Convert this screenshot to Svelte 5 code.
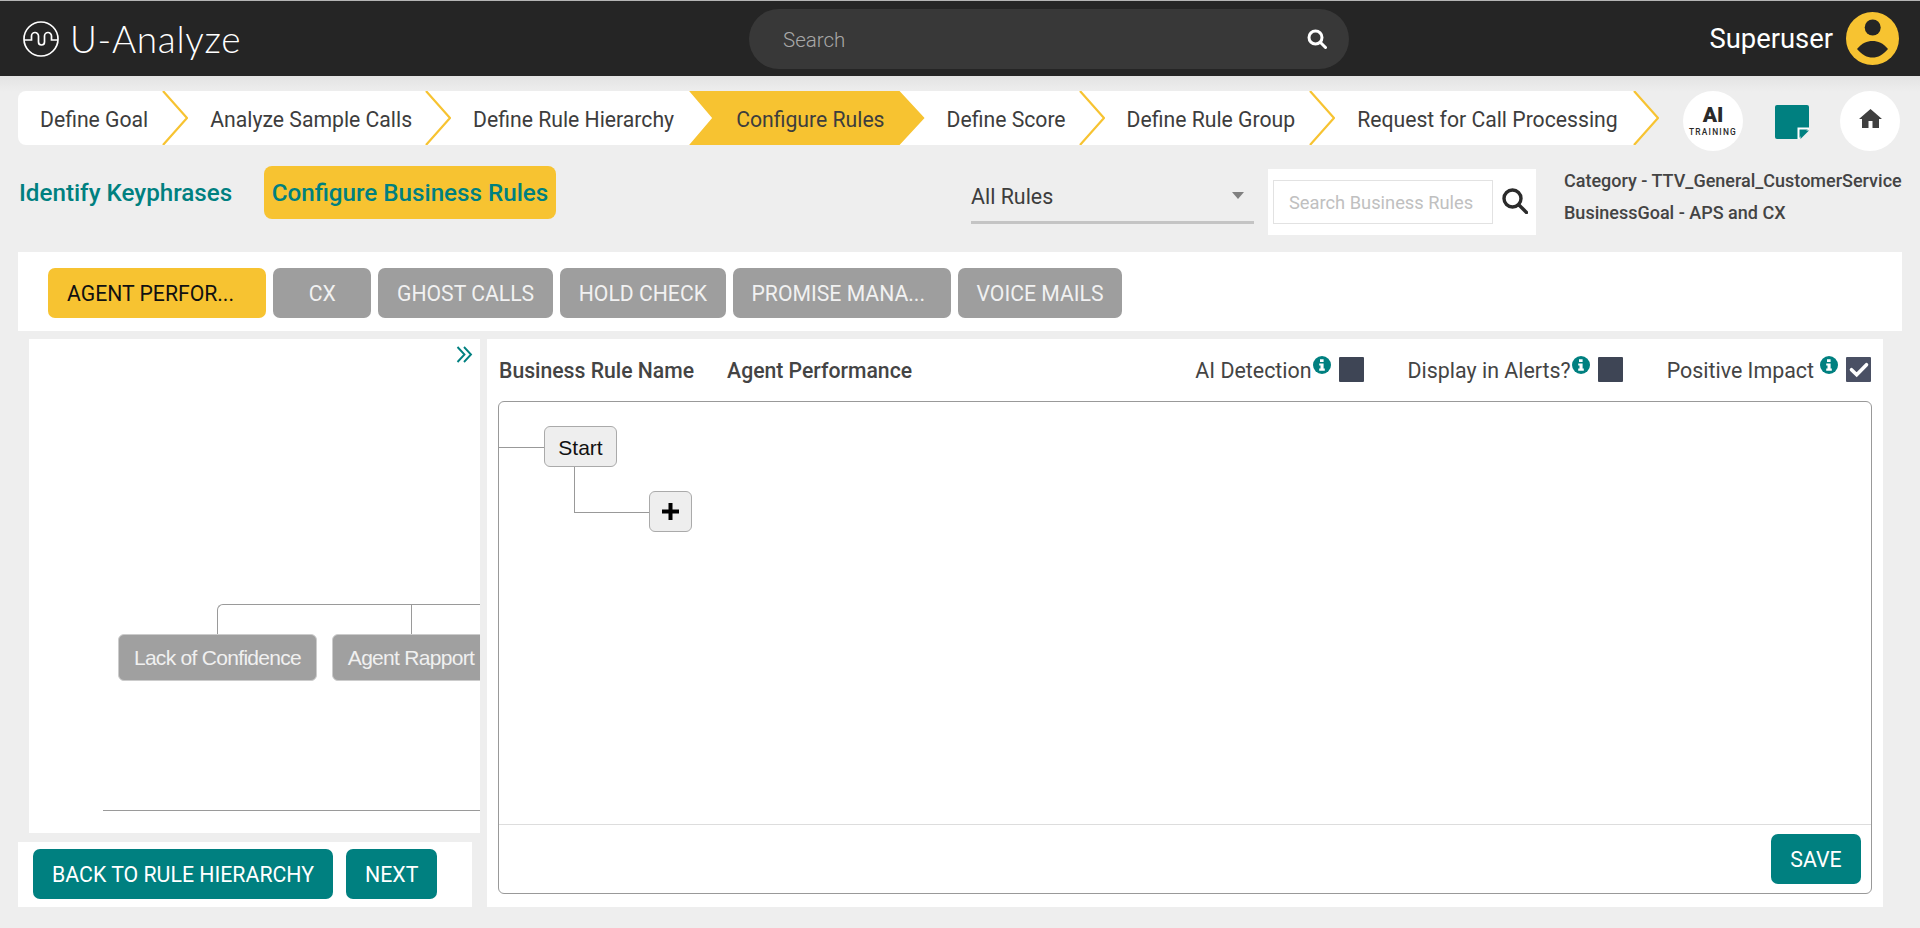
<script lang="ts">
    type Step = { label: string, kind: string };

    const steps: Step[] = [
        { label: "Define Goal", kind: "done" },
        { label: "Analyze Sample Calls", kind: "done tight" },
        { label: "Define Rule Hierarchy", kind: "before" },
        { label: "Configure Rules", kind: "active" },
        { label: "Define Score", kind: "done tight" },
        { label: "Define Rule Group", kind: "done" },
        { label: "Request for Call Processing", kind: "done last" },
    ];

    const rules = [
        { label: "AGENT PERFOR...", cut: true },
        { label: "CX", cut: false },
        { label: "GHOST CALLS", cut: false },
        { label: "HOLD CHECK", cut: false },
        { label: "PROMISE MANA...", cut: true },
        { label: "VOICE MAILS", cut: false },
    ];

    const flags = [
        { label: "AI Detection", checked: false, gap: false },
        { label: "Display in Alerts?", checked: false, gap: false },
        { label: "Positive Impact", checked: true, gap: true },
    ];
</script>

<div class="page">
    <header class="topbar">
        <div class="brand">
            <svg class="logo" viewBox="0 0 36 36" fill="none" stroke="#fff" stroke-width="1.7">
                <circle cx="18" cy="18" r="17" />
                <path d="M1 19H8.5V15a3.5 3.5 0 0 1 7 0v6a3 3 0 0 0 6 0v-6a3.5 3.5 0 0 1 7 0v4H35" />
            </svg>
            <span>U-Analyze</span>
        </div>
        <div class="search">
            <span>Search</span>
            <svg viewBox="0 0 20 20" fill="none" stroke="#fff" stroke-width="3">
                <circle cx="8.5" cy="8.5" r="6.5" />
                <path d="M13.5 13.5l5 5" stroke-linecap="round" />
            </svg>
        </div>
        <div class="user">
            <span>Superuser</span>
            <svg viewBox="0 0 53 53">
                <circle cx="26.5" cy="26.5" r="26.5" fill="#f7c331" />
                <circle cx="26.7" cy="15.5" r="8" fill="#252525" />
                <path d="M11 37C16 31 21 29 26.5 29S37 31 42 37C37 43 32 45.5 26.5 45.5S16 43 11 37z" fill="#252525" />
            </svg>
        </div>
    </header>

    <div class="steps-row">
        <nav class="steps">
            {#each steps as step}
                <div class="step {step.kind}">
                    <span>{step.label}</span>
                    {#if step.kind.startsWith("done")}
                        <svg viewBox="0 0 26 54" fill="none" stroke="#f7c331" stroke-width="2.2">
                            <path d="M1 0l24 27L1 54" />
                        </svg>
                    {/if}
                </div>
            {/each}
        </nav>
        <div class="round ai">
            <b>AI</b>
            <small>TRAINING</small>
        </div>
        <svg class="note" viewBox="0 0 34 34">
            <path d="M2 0h30a2 2 0 0 1 2 2v21L23 34H2a2 2 0 0 1-2-2V2a2 2 0 0 1 2-2z" fill="#008080" />
            <path d="M23.5 34V23.5H34" fill="none" stroke="#fff" stroke-width="2" />
            <path d="M25.5 25.5H34L25.5 34z" fill="#008080" />
        </svg>
        <div class="round home">
            <svg viewBox="0 0 23 19">
                <path d="M11.5 0L23 10h-3v9h-6.5v-7h-4v7H3v-9H0z" fill="#3f3f3f" />
            </svg>
        </div>
    </div>

    <div class="filter-row">
        <a class="tab" href="#keyphrases">Identify Keyphrases</a>
        <a class="tab current" href="#rules">Configure Business Rules</a>
        <div class="select">
            <span>All Rules</span>
            <i class="caret"></i>
        </div>
        <div class="rule-search">
            <div class="rule-input">Search Business Rules</div>
            <svg viewBox="0 0 26 26" fill="none" stroke="#2b2b2b" stroke-width="3.4">
                <circle cx="10.5" cy="10.5" r="8.5" />
                <path d="M17 17l7.5 7.5" stroke-linecap="round" />
            </svg>
        </div>
        <div class="meta">
            <p>Category - TTV_General_CustomerService</p>
            <p>BusinessGoal - APS and CX</p>
        </div>
    </div>

    <div class="rules-bar">
        {#each rules as rule, i}
            <button class="rule" class:cut={rule.cut} class:on={i === 0}>{rule.label}</button>
        {/each}
    </div>

    <main class="main">
        <div class="left">
            <section class="tree">
                <svg class="expand" viewBox="0 0 17 17" fill="none" stroke="#008080" stroke-width="1.9">
                    <path d="M1.5 1l7 7.5-7 7.5M8 1l7 7.5-7 7.5" />
                </svg>
                <div class="branch"></div>
                <div class="stem"></div>
                <div class="node first">Lack of Confidence</div>
                <div class="node second">Agent Rapport</div>
                <div class="scroll-line"></div>
            </section>
            <section class="left-actions">
                <button class="teal">BACK TO RULE HIERARCHY</button>
                <button class="teal">NEXT</button>
            </section>
        </div>

        <section class="editor">
            <div class="editor-head">
                <span class="name-label">Business Rule Name</span>
                <span class="name-value">Agent Performance</span>
                <div class="flags">
                    {#each flags as flag}
                        <div class="flag">
                            <span>{flag.label}</span>
                            <svg class="info" class:gap={flag.gap} viewBox="0 0 18 18">
                                <circle cx="9" cy="9" r="9" fill="#008080" />
                                <path d="M7 3.2h3.6v2.8H7zM6.2 7.4h4.4v5.2h1.2v2.2H6.2v-2.2h1.3V9.6H6.2z" fill="#fff" />
                            </svg>
                            <div class="check" class:checked={flag.checked}>
                                {#if flag.checked}
                                    <svg viewBox="0 0 25 25" fill="none" stroke="#fff" stroke-width="3.6" stroke-linecap="round">
                                        <path d="M5.5 12.7l5.2 5L20.5 7.7" />
                                    </svg>
                                {/if}
                            </div>
                        </div>
                    {/each}
                </div>
            </div>
            <div class="box">
                <div class="canvas">
                    <div class="wire in"></div>
                    <div class="wire down"></div>
                    <div class="cnode start"><span>Start</span></div>
                    <div class="cnode plus">
                        <svg viewBox="0 0 17 17"><path d="M6.5 0h4v6.5H17v4h-6.5V17h-4v-6.5H0v-4h6.5z" fill="#000" /></svg>
                    </div>
                </div>
                <div class="box-foot">
                    <button class="teal">SAVE</button>
                </div>
            </div>
        </section>
    </main>
</div>

<style>
:global(body) {
    margin: 0;
    background: #eeeeee;
}

.page {
    width: 1920px;
    height: 928px;
    overflow: hidden;
    font-family: Roboto, "Liberation Sans", sans-serif;
    color: #3d3d3d;
    background: linear-gradient(#e3e3e3 76px, #eeeeee 92px);
}

/* top bar */
.topbar {
    display: flex;
    align-items: center;
    height: 75px;
    background: #252525;
    border-top: 1px solid #b5b5b5;
}

.brand {
    display: flex;
    align-items: center;
    width: 749px;
    padding-left: 23px;
    box-sizing: border-box;
    color: #fff;
    font-family: Lato, sans-serif;
    font-weight: 300;
    font-size: 37px;
    letter-spacing: 0.7px;
}

.logo {
    width: 36px;
    height: 36px;
    margin-right: 11px;
}

.search {
    display: flex;
    align-items: center;
    justify-content: space-between;
    box-sizing: border-box;
    width: 600px;
    height: 60px;
    padding: 0 22px 0 34px;
    border-radius: 30px;
    background: #383838;
    color: #a8a8a8;
    font-size: 20.5px;
    font-weight: 300;
}

.search span {
    margin-top: 2px;
}

.search svg {
    width: 20px;
    height: 20px;
}

.user {
    display: flex;
    align-items: center;
    margin-left: auto;
    margin-right: 21px;
    color: #fff;
    font-size: 27.4px;
}

.user svg {
    width: 53px;
    height: 53px;
    margin-left: 13px;
}

/* breadcrumb */
.steps-row {
    display: flex;
    align-items: flex-start;
    padding: 15px 20px 0 18px;
}

.steps {
    display: flex;
    flex: none;
    height: 54px;
    border-radius: 8px 0 0 8px;
    background: linear-gradient(#fff, #fff) no-repeat;
    background-size: calc(100% - 25px) 100%;
}

.step {
    display: flex;
    flex: none;
    align-items: center;
    font-size: 21.2px;
    color: #3d3d3d;
    white-space: nowrap;
}

.step span {
    margin: 2px 14px 0 22px;
}

.step.tight span {
    margin-right: 13px;
}

.step.before span,
.step.last span {
    margin-right: 15px;
}

.step svg {
    width: 26px;
    height: 54px;
}

.step.last svg {
    fill: #fff;
}

.step.active {
    background: #f7c331;
    clip-path: polygon(0 0, calc(100% - 25px) 0, 100% 50%, calc(100% - 25px) 100%, 0 100%, 23px 50%);
}

.step.active span {
    margin-left: 47px;
    margin-right: 40px;
}

.round {
    box-sizing: border-box;
    flex: none;
    width: 60px;
    height: 60px;
    border-radius: 50%;
    background: #fff;
}

.ai {
    display: flex;
    flex-direction: column;
    align-items: center;
    margin-left: auto;
    color: #2a2a2a;
}

.ai b {
    margin-top: 14px;
    font-size: 21px;
    line-height: 20px;
    font-weight: 900;
}

.ai small {
    margin-top: 1px;
    font-size: 8.4px;
    line-height: 12px;
    font-weight: 500;
    letter-spacing: 1.2px;
}

.note {
    flex: none;
    width: 34px;
    height: 34px;
    margin: 14px 31px 0 32px;
}

.home {
    display: flex;
    align-items: center;
    justify-content: center;
}

.home svg {
    width: 23px;
    height: 19px;
    margin-bottom: 5px;
}

/* second row */
.filter-row {
    display: flex;
    align-items: flex-start;
    height: 69px;
    padding: 15px 0 0 19px;
}

.tab {
    box-sizing: border-box;
    flex: none;
    width: 245px;
    height: 53px;
    line-height: 54px;
    color: #008080;
    font-size: 24.2px;
    font-weight: 500;
    text-decoration: none;
    white-space: nowrap;
}

.tab.current {
    width: 292px;
    text-align: center;
    border-radius: 8px;
    background: #f7c331;
}

.select {
    display: flex;
    align-items: center;
    justify-content: space-between;
    box-sizing: border-box;
    flex: none;
    width: 283px;
    height: 58px;
    margin-left: 415px;
    padding-right: 10px;
    border-bottom: 3px solid #c4c4c4;
    font-size: 21.4px;
}

.select span {
    margin-top: 5px;
}

.caret {
    margin-top: 3px;
    border-left: 6px solid transparent;
    border-right: 6px solid transparent;
    border-top: 7px solid #808080;
}

.rule-search {
    display: flex;
    box-sizing: border-box;
    flex: none;
    width: 268px;
    height: 66px;
    margin: 3px 0 0 14px;
    padding: 11px 0 0 5px;
    background: #fff;
}

.rule-input {
    box-sizing: border-box;
    width: 220px;
    height: 44px;
    padding-left: 15px;
    line-height: 44px;
    border: 1px solid #e2e2e2;
    font-size: 18.3px;
    color: #c0c0c0;
    white-space: nowrap;
}

.rule-search svg {
    width: 26px;
    height: 26px;
    margin: 8px 0 0 9px;
}

.meta {
    margin: -1px 0 0 28px;
    font-size: 18px;
    font-weight: 500;
    color: #444;
    white-space: nowrap;
}

.meta p {
    margin: 0;
    line-height: 32px;
}

/* rule tabs */
.rules-bar {
    display: flex;
    gap: 7px;
    box-sizing: border-box;
    width: 1884px;
    height: 79px;
    margin: 17px 0 0 18px;
    padding: 16px 0 0 30px;
    background: #fff;
}

.rule {
    min-width: 98px;
    height: 50px;
    padding: 0 18.5px 0 19px;
    border: 0;
    border-radius: 7px;
    background: #9e9e9e;
    color: #f1f1f1;
    font-family: inherit;
    font-size: 21.2px;
    white-space: nowrap;
}

.rule.cut {
    width: 218px;
    text-align: left;
}

.rule.on {
    background: #f7c331;
    color: #111;
}

/* main area */
.main {
    display: flex;
    gap: 7px;
    margin: 8px 0 0 18px;
}

.left {
    width: 462px;
}

.tree {
    position: relative;
    height: 494px;
    margin-left: 11px;
    overflow: hidden;
    background: #fff;
}

.expand {
    position: absolute;
    left: 427px;
    top: 7px;
    width: 17px;
    height: 17px;
}

.branch {
    position: absolute;
    left: 188px;
    top: 265px;
    width: 400px;
    height: 30px;
    box-sizing: border-box;
    border: 1px solid #9a9a9a;
    border-right: 0;
    border-bottom: 0;
    border-radius: 6px 0 0 0;
}

.stem {
    position: absolute;
    left: 382px;
    top: 265px;
    width: 1px;
    height: 30px;
    background: #9a9a9a;
}

.node {
    position: absolute;
    top: 295px;
    box-sizing: border-box;
    height: 47px;
    line-height: 45px;
    text-align: center;
    border: 1px solid #cccccc;
    border-radius: 6px;
    background: #a0a0a0;
    color: #f0f0f0;
    font-family: "Liberation Sans", sans-serif;
    font-size: 21px;
    letter-spacing: -0.7px;
    white-space: nowrap;
}

.node.first {
    left: 89px;
    width: 199px;
}

.node.second {
    left: 303px;
    width: 158px;
}

.scroll-line {
    position: absolute;
    left: 74px;
    right: 0;
    top: 471px;
    height: 1px;
    background: #9a9a9a;
}

.left-actions {
    display: flex;
    gap: 13px;
    box-sizing: border-box;
    width: 454px;
    height: 65px;
    margin-top: 9px;
    padding: 7px 0 0 15px;
    background: #fff;
}

.teal {
    height: 50px;
    padding: 0 19px;
    border: 0;
    border-radius: 7px;
    background: #008080;
    color: #fff;
    font-family: inherit;
    font-size: 21.3px;
    white-space: nowrap;
}

.editor {
    width: 1396px;
    height: 568px;
    background: #fff;
}

.editor-head {
    display: flex;
    align-items: center;
    height: 62px;
    padding: 0 12px;
    font-size: 21.2px;
    font-weight: 500;
    color: #444;
}

.name-value {
    margin-left: 33px;
}

.flags {
    display: flex;
    gap: 44px;
    margin-left: auto;
    font-size: 21.4px;
    font-weight: 400;
}

.flag {
    display: flex;
    align-items: center;
}

.info {
    width: 18px;
    height: 18px;
    margin: 0 8px 11px 1px;
}

.info.gap {
    margin-left: 6px;
}

.check {
    width: 25px;
    height: 25px;
    margin-bottom: 1px;
    border-radius: 1px;
    background: #3e4555;
}

.check.checked {
    background: #4a5064;
}

.check svg {
    display: block;
}

.box {
    display: flex;
    flex-direction: column;
    box-sizing: border-box;
    width: 1374px;
    height: 493px;
    margin-left: 11px;
    border: 1px solid #999999;
    border-radius: 6px;
}

.canvas {
    position: relative;
    flex: 1;
}

.wire.in {
    position: absolute;
    left: 0;
    top: 45px;
    width: 46px;
    height: 1px;
    background: #999999;
}

.wire.down {
    position: absolute;
    left: 75px;
    top: 65px;
    width: 76px;
    height: 46px;
    box-sizing: border-box;
    border-left: 1px solid #999999;
    border-bottom: 1px solid #999999;
}

.cnode {
    position: absolute;
    display: flex;
    align-items: center;
    justify-content: center;
    box-sizing: border-box;
    height: 41px;
    border: 1px solid #aaaaaa;
    border-radius: 6px;
    background: #eeeeee;
    color: #111;
    font-family: "Liberation Sans", sans-serif;
    font-size: 21px;
}

.cnode span {
    margin-top: 2px;
}

.cnode.start {
    left: 45px;
    top: 24px;
    width: 73px;
}

.cnode.plus {
    left: 150px;
    top: 89px;
    width: 43px;
}

.cnode.plus svg {
    width: 17px;
    height: 17px;
}

.box-foot {
    display: flex;
    justify-content: flex-end;
    height: 69px;
    padding: 9px 10px 0 0;
    box-sizing: border-box;
    border-top: 1px solid #dddddd;
}

.box-foot .teal {
    width: 90px;
    padding: 0;
}
</style>
